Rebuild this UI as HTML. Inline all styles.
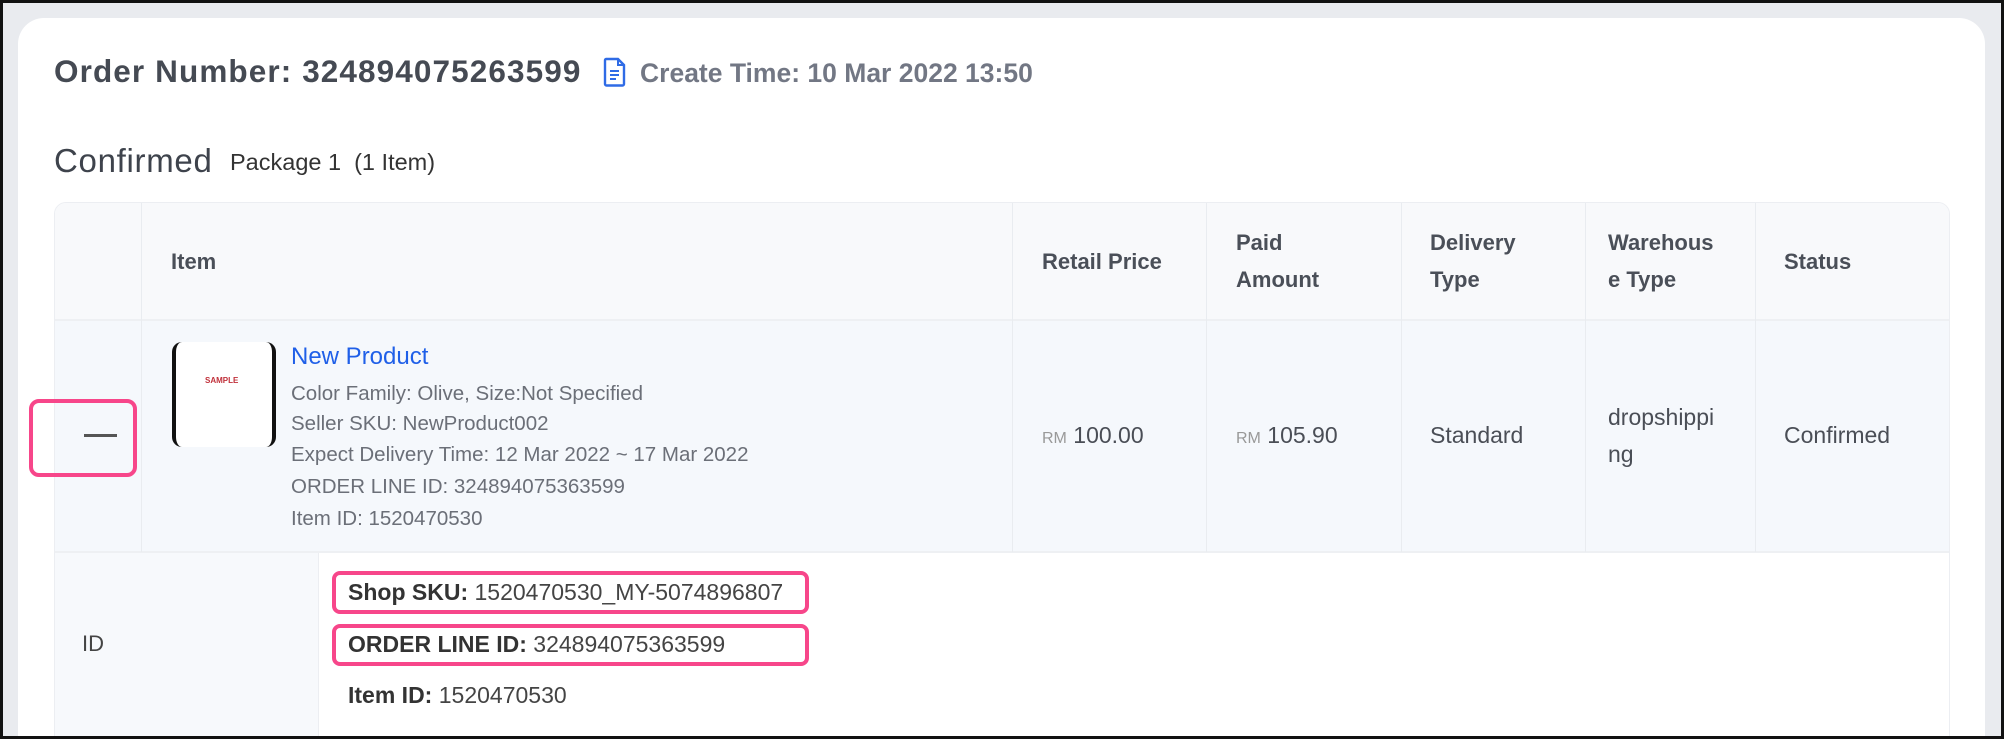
<!DOCTYPE html>
<html><head><meta charset="utf-8"><style>
*{margin:0;padding:0;box-sizing:border-box}
html,body{width:2004px;height:739px;overflow:hidden}
body{background:#e9ebef;font-family:"Liberation Sans",sans-serif;position:relative}
.frame{position:absolute;left:0;top:0;width:2004px;height:739px;border:3px solid #111;z-index:10;pointer-events:none}
.card{position:absolute;left:18px;top:18px;width:1967px;height:721px;background:#fff;border-radius:26px 26px 0 0}
.a{position:absolute;white-space:nowrap}
.h{font-weight:bold;color:#4a4f58;font-size:22px;line-height:37px}
.d{font-size:20.5px;color:#6b6f78}
.v{font-size:23px;color:#4a4e56}
.pink{position:absolute;border:4px solid #f7468a;border-radius:8px}
.vl{position:absolute;width:1px;background:#e9ecf0}
</style></head><body>
<div class="card"></div>
<div class="a" style="left:54px;top:53px;font-size:31.5px;font-weight:bold;color:#454a53;letter-spacing:1.1px">Order Number: 324894075263599</div>
<svg class="a" style="left:603px;top:57px" width="24" height="30" viewBox="0 0 24 30"><path d="M3 2h12l6 6v19a1.5 1.5 0 0 1-1.5 1.5h-16A1.5 1.5 0 0 1 2 27V3.5A1.5 1.5 0 0 1 3 2z" fill="none" stroke="#2f6be6" stroke-width="2.4"/><path d="M15 2v6h6" fill="none" stroke="#2f6be6" stroke-width="2"/><path d="M7 14h9M7 18h9M7 22h6" stroke="#2f6be6" stroke-width="2"/></svg>
<div class="a" style="left:640px;top:58px;font-size:26.5px;font-weight:bold;color:#727784">Create Time: 10 Mar 2022 13:50</div>
<div class="a" style="left:54px;top:142px;font-size:33px;color:#3e434c;letter-spacing:0.7px">Confirmed</div>
<div class="a" style="left:230px;top:149px;font-size:23.5px;color:#333">Package 1&nbsp;&nbsp;(1 Item)</div>

<div class="a" style="left:54px;top:202px;width:1896px;height:540px;border:1px solid #eceef2;border-radius:12px 12px 0 0;overflow:hidden;background:#fff">
  <div class="a" style="left:0;top:0;width:1896px;height:118px;background:#f8f9fb;border-bottom:2px solid #eef0f3"></div>
  <div class="a" style="left:0;top:118px;width:1896px;height:232px;background:#f5f8fc;border-bottom:2px solid #eef0f3"></div>
  <div class="a" style="left:0;top:350px;width:264px;height:200px;background:#f7f9fc;border-right:1px solid #eceef2"></div>
</div>
<div class="vl" style="left:141px;top:203px;height:349px"></div>
<div class="vl" style="left:1012px;top:203px;height:349px"></div>
<div class="vl" style="left:1206px;top:203px;height:349px"></div>
<div class="vl" style="left:1401px;top:203px;height:349px"></div>
<div class="vl" style="left:1585px;top:203px;height:349px"></div>
<div class="vl" style="left:1755px;top:203px;height:349px"></div>

<div class="a h" style="left:171px;top:243px">Item</div>
<div class="a h" style="left:1042px;top:243px">Retail Price</div>
<div class="a h" style="left:1236px;top:224px">Paid<br>Amount</div>
<div class="a h" style="left:1430px;top:224px">Delivery<br>Type</div>
<div class="a h" style="left:1608px;top:224px">Warehous<br>e Type</div>
<div class="a h" style="left:1784px;top:243px">Status</div>

<div class="pink" style="left:29px;top:399px;width:108px;height:78px;border-radius:10px"></div>
<div class="a" style="left:84px;top:434px;width:33px;height:3px;background:#555"></div>
<div class="a" style="left:172px;top:342px;width:104px;height:105px;background:#fff;border-left:4px solid #111;border-right:4px solid #111;border-radius:10px"></div>
<div class="a" style="left:205px;top:376px;font-size:8px;font-weight:bold;color:#c0303a">SAMPLE</div>
<div class="a" style="left:291px;top:343px;font-size:24px;color:#1f5fe8">New Product</div>
<div class="a d" style="left:291px;top:382px">Color Family: Olive, Size:Not Specified</div>
<div class="a d" style="left:291px;top:412px">Seller SKU: NewProduct002</div>
<div class="a d" style="left:291px;top:443px">Expect Delivery Time: 12 Mar 2022 ~ 17 Mar 2022</div>
<div class="a d" style="left:291px;top:475px">ORDER LINE ID: 324894075363599</div>
<div class="a d" style="left:291px;top:507px">Item ID: 1520470530</div>

<div class="a v" style="left:1042px;top:422px"><span style="font-size:16px;color:#999">RM</span> 100.00</div>
<div class="a v" style="left:1236px;top:422px"><span style="font-size:16px;color:#999">RM</span> 105.90</div>
<div class="a v" style="left:1430px;top:422px">Standard</div>
<div class="a v" style="left:1608px;top:399px;line-height:37px">dropshippi<br>ng</div>
<div class="a v" style="left:1784px;top:422px">Confirmed</div>

<div class="a" style="left:82px;top:631px;font-size:22px;color:#444">ID</div>
<div class="pink" style="left:332px;top:571px;width:477px;height:43px"></div>
<div class="pink" style="left:332px;top:624px;width:477px;height:42px"></div>
<div class="a" style="left:348px;top:579px;font-size:23px;color:#444"><b style="color:#333">Shop SKU:</b> 1520470530_MY-5074896807</div>
<div class="a" style="left:348px;top:631px;font-size:23px;color:#444"><b style="color:#333">ORDER LINE ID:</b> 324894075363599</div>
<div class="a" style="left:348px;top:682px;font-size:23px;color:#444"><b style="color:#333">Item ID:</b> 1520470530</div>
<div class="frame"></div>
</body></html>
